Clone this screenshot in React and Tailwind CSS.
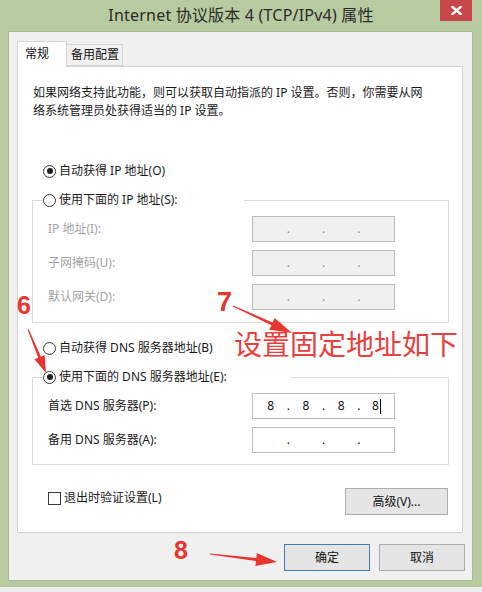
import React from 'react'

const FONT = "font-['Noto_Sans','Noto_Sans_CJK_SC',sans-serif]"

const Radio = ({ checked }) => (
  <span className="w-[13px] h-[13px] rounded-full border border-[#3a3a3a] bg-white flex items-center justify-center shrink-0">
    {checked && <span className="w-[6px] h-[6px] rounded-full bg-[#1e1e1e]" />}
  </span>
)

// ip box split into 4 equal parts with dots on the borders
const IpBox = ({ values = ['', '', '', ''], disabled, caret }) => (
  <div className={`w-[143px] h-[26px] border border-[#bdbdbd] flex items-center text-[12px] text-[#111] ${disabled ? 'bg-[#f0f0f0]' : 'bg-white'}`}>
    {values.map((v, i) => (
      <React.Fragment key={i}>
        <div className="flex-1 flex justify-center items-center">
          <span>{v}</span>
          {caret && i === 3 && <span className="w-px h-[15px] bg-black ml-[1px]" />}
        </div>
        {i < 3 && <span className={`w-0 flex justify-center ${disabled ? 'text-[#8a8a8a]' : 'text-[#111]'}`}>.</span>}
      </React.Fragment>
    ))}
  </div>
)

const Row = ({ label, disabled, children }) => (
  <div className="flex items-center h-[26px]">
    <span className={`w-[204px] text-[12px] ${disabled ? 'text-[#a3a3a3]' : 'text-[#1a1a1a]'}`}>{label}</span>
    {children}
  </div>
)

function arrow([x1, y1], [x2, y2], headLen, headW, shaftW) {
  const len = Math.hypot(x2 - x1, y2 - y1)
  const dx = (x2 - x1) / len, dy = (y2 - y1) / len
  const nx = -dy, ny = dx
  const bx = x2 - dx * headLen, by = y2 - dy * headLen
  const p = [
    [x1 + nx * 0.5, y1 + ny * 0.5],
    [bx + nx * shaftW / 2, by + ny * shaftW / 2],
    [bx + nx * headW / 2, by + ny * headW / 2],
    [x2, y2],
    [bx - nx * headW / 2, by - ny * headW / 2],
    [bx - nx * shaftW / 2, by - ny * shaftW / 2],
    [x1 - nx * 0.5, y1 - ny * 0.5],
  ]
  return p.map(q => q.map(n => n.toFixed(1)).join(',')).join(' ')
}

export default function App() {
  return (
    <div className={`relative w-[482px] h-[592px] bg-[#b8ca9f] flex flex-col ${FONT}`}>

      {/* Title bar */}
      <div className="relative h-[31px] flex items-center justify-center text-[16px] text-[#2b2b2b] shrink-0">
        <span className="-mt-[1px] tracking-[0.2px]">Internet 协议版本 4 (TCP/IPv4) 属性</span>
        <div className="absolute top-0 right-[10px] w-[32px] h-[21px] bg-[#c8474b] flex items-center justify-center">
          <svg width="11" height="9" viewBox="0 0 11 9">
            <path d="M1.5 1 L9.5 8 M9.5 1 L1.5 8" stroke="white" strokeWidth="2.4" strokeLinecap="square" />
          </svg>
        </div>
      </div>

      {/* Dialog body */}
      <div className="ml-[8px] w-[465px] h-[550px] bg-[#f0f0f0] border border-[#a9ba92] pl-[8px] pt-[9px] flex flex-col">

        {/* Tabs */}
        <div className="flex items-end h-[25px] text-[12px] text-[#111]">
          <div className="relative z-10 h-[26px] -mb-px w-[50px] bg-white border border-b-0 border-[#d4d4d4] pl-[7px] pt-[3px]">常规</div>
          <div className="h-[22px] w-[56px] bg-[#f0f0f0] border border-l-0 border-[#d4d4d4] pl-[4px] pt-[1px]">备用配置</div>
        </div>

        {/* Tab panel */}
        <div className="w-[446px] h-[467px] bg-white border border-[#d4d4d4] pl-[14px] pr-[13px] pt-[17px] flex flex-col text-[12px] text-[#1a1a1a]">
          <p className="leading-[18px] pl-px">
            如果网络支持此功能，则可以获取自动指派的 IP 设置。否则，你需要从网<br />
            络系统管理员处获得适当的 IP 设置。
          </p>

          <div className="mt-[43px] ml-[11px] h-[16px] flex items-center gap-[3px]">
            <Radio checked />
            <span>自动获得 IP 地址(O)</span>
          </div>

          <fieldset className="mt-[13px] border border-[#dcdcdc] px-[15px] pt-[8px] pb-[12px] flex flex-col gap-[8px]">
            <legend className="-ml-[5px] w-[201px] h-[16px] bg-white flex items-center gap-[3px]">
              <Radio />
              <span>使用下面的 IP 地址(S):</span>
            </legend>
            <Row label="IP 地址(I):" disabled><IpBox disabled /></Row>
            <Row label="子网掩码(U):" disabled><IpBox disabled /></Row>
            <Row label="默认网关(D):" disabled><IpBox disabled /></Row>
          </fieldset>

          <div className="mt-[17px] ml-[11px] h-[16px] flex items-center gap-[3px]">
            <Radio />
            <span>自动获得 DNS 服务器地址(B)</span>
          </div>

          <fieldset className="mt-[13px] border border-[#dcdcdc] px-[15px] pt-[8px] pb-[11px] flex flex-col gap-[8px]">
            <legend className="-ml-[5px] w-[248px] h-[16px] bg-white flex items-center gap-[3px]">
              <Radio checked />
              <span>使用下面的 DNS 服务器地址(E):</span>
            </legend>
            <Row label="首选 DNS 服务器(P):"><IpBox values={['8', '8', '8', '8']} caret /></Row>
            <Row label="备用 DNS 服务器(A):"><IpBox /></Row>
          </fieldset>

          <div className="mt-[23px] flex items-start justify-between pl-[16px] pr-[1px]">
            <div className="mt-[1px] flex items-center gap-[3px]">
              <span className="w-[13px] h-[13px] border border-[#3a3a3a] bg-white" />
              <span>退出时验证设置(L)</span>
            </div>
            <button className="w-[103px] h-[27px] border border-[#adadad] bg-[#e5e5e5] text-[12px] text-[#111]">高级(V)...</button>
          </div>
        </div>

        {/* Bottom buttons */}
        <div className="mt-[11px] flex gap-[9px] pl-[267px] text-[12px] text-[#111]">
          <button className="w-[86px] h-[27px] border border-[#3c7fb1] bg-[#e5e5e5]">确定</button>
          <button className="w-[86px] h-[27px] border border-[#adadad] bg-[#e5e5e5]">取消</button>
        </div>
      </div>

      <div className="mt-auto h-[5px] bg-[#eceff0]" />

      {/* Annotations */}
      <svg className="absolute inset-0 pointer-events-none" width="482" height="592">
        <polygon points={arrow([28, 329], [46, 373], 17, 11, 3)} fill="#e8352f" />
        <polygon points={arrow([233, 306], [292, 333], 22, 13, 3)} fill="#e8352f" />
        <polygon points={arrow([210, 554], [277, 562], 21, 13, 3)} fill="#e8352f" />
      </svg>
      <span className="absolute left-[17px] top-[293px] text-[25px] leading-none font-bold text-[#e8352f] font-['Liberation_Sans',sans-serif]">6</span>
      <span className="absolute left-[217px] top-[289px] text-[27px] leading-none font-bold text-[#e8352f] font-['Liberation_Sans',sans-serif]">7</span>
      <span className="absolute left-[174px] top-[538px] text-[25px] leading-none font-bold text-[#e8352f] font-['Liberation_Sans',sans-serif]">8</span>
      <span className="absolute left-[234px] top-[329px] text-[28px] leading-none text-[#e8403c] font-['Noto_Sans_CJK_SC',sans-serif]">设置固定地址如下</span>
    </div>
  )
}
